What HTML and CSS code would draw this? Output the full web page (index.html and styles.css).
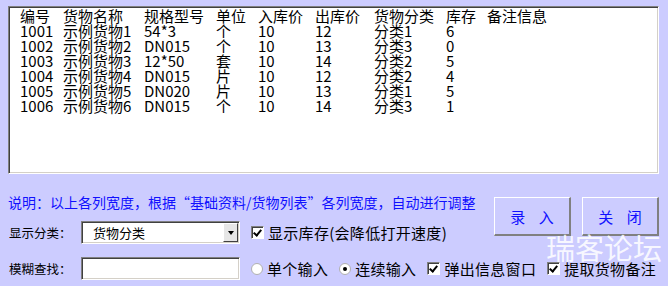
FILE: index.html
```html
<!DOCTYPE html>
<html lang="zh-CN">
<head>
  <meta charset="UTF-8" />
  <meta name="viewport" content="width=device-width, initial-scale=1.0" />
  <title>货物选择</title>
  <link rel="stylesheet" href="styles.css">
</head>
<body>
  <div class="list">
    <div class="row">
      <span>编号</span><span>货物名称</span><span>规格型号</span><span>单位</span><span>入库价</span><span>出库价</span><span>货物分类</span><span>库存</span><span>备注信息</span>
    </div>
    <div class="row">
      <span>1001</span><span>示例货物1</span><span>54*3</span><span>个</span><span>10</span><span>12</span><span>分类1</span><span>6</span><span></span>
    </div>
    <div class="row">
      <span>1002</span><span>示例货物2</span><span>DN015</span><span>个</span><span>10</span><span>13</span><span>分类3</span><span>0</span><span></span>
    </div>
    <div class="row">
      <span>1003</span><span>示例货物3</span><span>12*50</span><span>套</span><span>10</span><span>14</span><span>分类2</span><span>5</span><span></span>
    </div>
    <div class="row">
      <span>1004</span><span>示例货物4</span><span>DN015</span><span>片</span><span>10</span><span>12</span><span>分类2</span><span>4</span><span></span>
    </div>
    <div class="row">
      <span>1005</span><span>示例货物5</span><span>DN020</span><span>片</span><span>10</span><span>13</span><span>分类1</span><span>5</span><span></span>
    </div>
    <div class="row">
      <span>1006</span><span>示例货物6</span><span>DN015</span><span>个</span><span>10</span><span>14</span><span>分类3</span><span>1</span><span></span>
    </div>
  </div>

  <div class="bottom">
    <div class="top-part">
      <div class="left-col">
        <div class="note">说明：以上各列宽度，根据“基础资料/货物列表”各列宽度，自动进行调整</div>
        <div class="form-row">
          <span class="label">显示分类：</span>
          <div class="select">
            <span class="select-text">货物分类</span>
            <span class="select-btn"><span class="arrow"></span></span>
          </div>
          <span class="check checked"></span>
          <span class="opt">显示库存(会降低打开速度)</span>
        </div>
      </div>
      <div class="buttons">
        <div class="btn">录 入</div>
        <div class="btn">关 闭</div>
      </div>
    </div>
    <div class="form-row second">
      <span class="label">模糊查找：</span>
      <div class="input"></div>
      <span class="radio"></span>
      <span class="opt">单个输入</span>
      <span class="radio on"></span>
      <span class="opt">连续输入</span>
      <span class="check checked"></span>
      <span class="opt">弹出信息窗口</span>
      <span class="check checked"></span>
      <span class="opt">提取货物备注</span>
    </div>
  </div>

  <div class="watermark">瑞客论坛</div>
</body>
</html>
```

FILE: styles.css
```css
body {
  margin: 0;
  padding: 6px 9px 0 8px;
  background: #ccccff;
  color: #000;
  font-family: "Noto Sans CJK SC", "DejaVu Sans", sans-serif;
  position: relative;
  height: 280px;
  overflow: hidden;
}
.list {
  height: 165px;
  background: #fff;
  border-top: 1px solid #808080;
  border-left: 1px solid #808080;
  border-right: 1px solid #fff;
  border-bottom: 1px solid #fff;
  box-shadow: inset 1px 1px 0 #404040, inset -1px -1px 0 #d4d0c8;
  padding: 1px 0 0 11px;
}
.row {
  display: grid;
  grid-template-columns: 43px 81px 72px 42px 57px 59px 72px 41px 1fr;
  font-size: 15px;
  line-height: 15px;
  height: 15px;
  white-space: nowrap;
}
.top-part {
  display: flex;
  justify-content: space-between;
}
.note {
  margin-top: 20px;
  color: #1010ff;
  font-size: 14px;
  line-height: 16px;
  height: 16px;
  white-space: nowrap;
}
.form-row {
  display: flex;
  align-items: center;
  height: 23px;
  margin-top: 11px;
  white-space: nowrap;
}
.form-row.second {
  margin-top: 13px;
}
.label {
  width: 72px;
  padding-left: 1px;
  font-size: 12.5px;
}
.select, .input {
  width: 155px;
  height: 19px;
  background: #fff;
  border-top: 1px solid #808080;
  border-left: 1px solid #808080;
  border-right: 1px solid #fff;
  border-bottom: 1px solid #fff;
  box-shadow: inset 1px 1px 0 #404040, inset -1px -1px 0 #d4d0c8;
  padding: 1px;
  display: flex;
  align-items: center;
}
.select-text {
  flex: 1;
  padding-left: 10px;
  font-size: 13px;
}
.select-btn {
  width: 15px;
  height: 19px;
  box-sizing: border-box;
  background: #e6e6e6;
  border-top: 1px solid #fff;
  border-left: 1px solid #fff;
  border-right: 1px solid #404040;
  border-bottom: 1px solid #404040;
  display: flex;
  align-items: center;
  justify-content: center;
}
.arrow {
  width: 0;
  height: 0;
  border-left: 3.5px solid transparent;
  border-right: 3.5px solid transparent;
  border-top: 4px solid #000;
}
.check, .radio {
  width: 11px;
  height: 11px;
  background: #fff;
  margin-left: 11px;
  margin-right: 4px;
  position: relative;
  flex: none;
}
.check {
  border-top: 1px solid #808080;
  border-left: 1px solid #808080;
  border-right: 1px solid #fff;
  border-bottom: 1px solid #fff;
  box-shadow: inset 1px 1px 0 #404040;
}
.check.checked::after {
  content: "";
  position: absolute;
  left: 3px;
  top: 1px;
  width: 3px;
  height: 6px;
  border-right: 2px solid #000;
  border-bottom: 2px solid #000;
  transform: rotate(40deg);
}
.radio {
  border-radius: 50%;
  border: 1px solid #b0b0b0;
  width: 10px;
  height: 10px;
}
.radio.on::after {
  content: "";
  position: absolute;
  left: 3px;
  top: 3px;
  width: 4px;
  height: 4px;
  border-radius: 50%;
  background: #000;
}
.opt {
  font-size: 15px;
  letter-spacing: 0.3px;
}
.buttons {
  display: flex;
  gap: 11px;
  margin-top: 23px;
}
.btn {
  width: 74px;
  height: 36px;
  background: #ccccff;
  border-top: 1px solid #fff;
  border-left: 1px solid #fff;
  border-right: 2px solid #808080;
  border-bottom: 2px solid #808080;
  color: #1010ff;
  font-size: 15px;
  word-spacing: 10px;
  display: flex;
  align-items: center;
  justify-content: center;
  white-space: pre;
}
.watermark {
  position: absolute;
  left: 546px;
  top: 229px;
  font-size: 29px;
  line-height: 36px;
  color: rgba(255, 255, 255, 0.85);
}
```
